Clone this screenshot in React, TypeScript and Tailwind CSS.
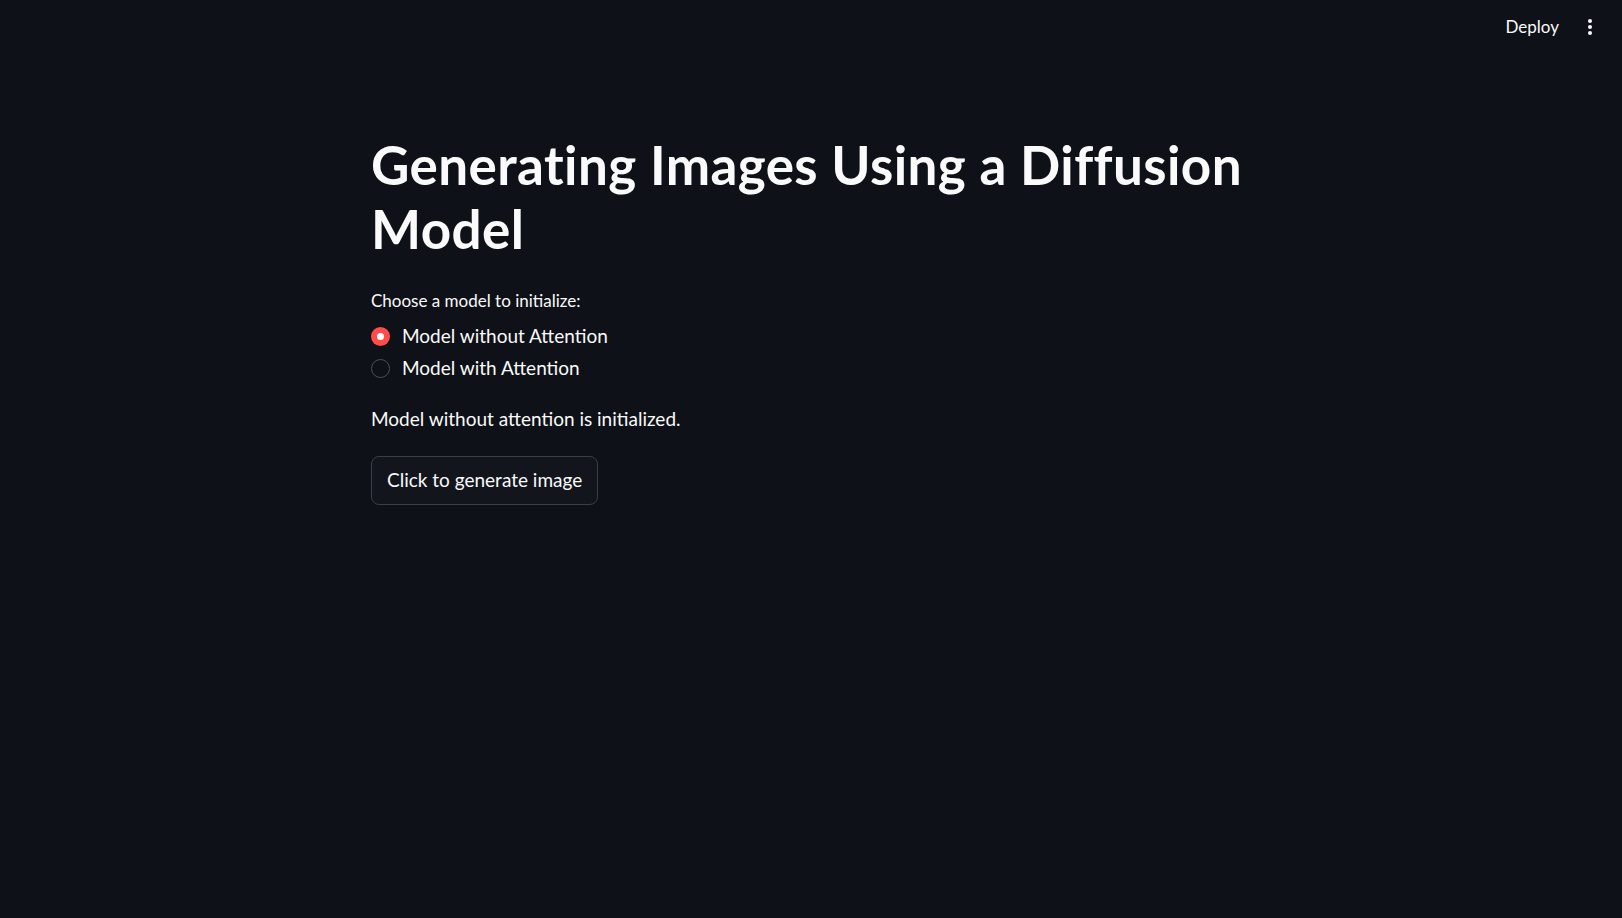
import { useState } from 'react';

const FONT = { fontFamily: 'Lato, "Noto Sans", sans-serif' };

function Radio({ checked, label, onClick }: { checked: boolean; label: string; onClick: () => void }) {
  return (
    <label onClick={onClick} className="flex items-center h-[32px] cursor-pointer">
      {checked ? (
        <span className="w-[19px] h-[19px] rounded-full bg-[#ff4b4b] flex items-center justify-center">
          <span className="w-[7px] h-[7px] rounded-full bg-white" />
        </span>
      ) : (
        <span className="w-[19px] h-[19px] rounded-full border-[1.5px] border-[#4c4f57]" />
      )}
      <span className="ml-[12px] text-[19px] text-[#fafafa]">{label}</span>
    </label>
  );
}

export default function App() {
  const [model, setModel] = useState(0);

  return (
    <div style={FONT} className="min-h-[918px] bg-[#0e1117] text-[#fafafa]">
      {/* top bar */}
      <header className="h-[54px] flex items-center justify-end pr-[30px]">
        <span className="text-[17px] mr-[29px]">Deploy</span>
        <div className="flex flex-col gap-[2px]">
          <span className="w-[4px] h-[4px] rounded-full bg-[#fafafa]" />
          <span className="w-[4px] h-[4px] rounded-full bg-[#fafafa]" />
          <span className="w-[4px] h-[4px] rounded-full bg-[#fafafa]" />
        </div>
      </header>

      <main className="w-[880px] mx-auto pt-[79px]">
        <h1 className="text-[53px] leading-[64px] font-bold tracking-[0.4px]">
          Generating Images Using a Diffusion Model
        </h1>

        <p className="mt-[27px] text-[17px]">Choose a model to initialize:</p>
        <div className="mt-[7px] flex flex-col">
          <Radio checked={model === 0} label="Model without Attention" onClick={() => setModel(0)} />
          <Radio checked={model === 1} label="Model with Attention" onClick={() => setModel(1)} />
        </div>

        <p className="mt-[20px] text-[19px]">
          {model === 0 ? 'Model without attention is initialized.' : 'Model with attention is initialized.'}
        </p>

        <button className="mt-[23px] h-[49px] px-[15px] rounded-[8px] border border-[#3b3e46] bg-[#12151c] text-[19px] text-[#fafafa]">
          Click to generate image
        </button>
      </main>
    </div>
  );
}
